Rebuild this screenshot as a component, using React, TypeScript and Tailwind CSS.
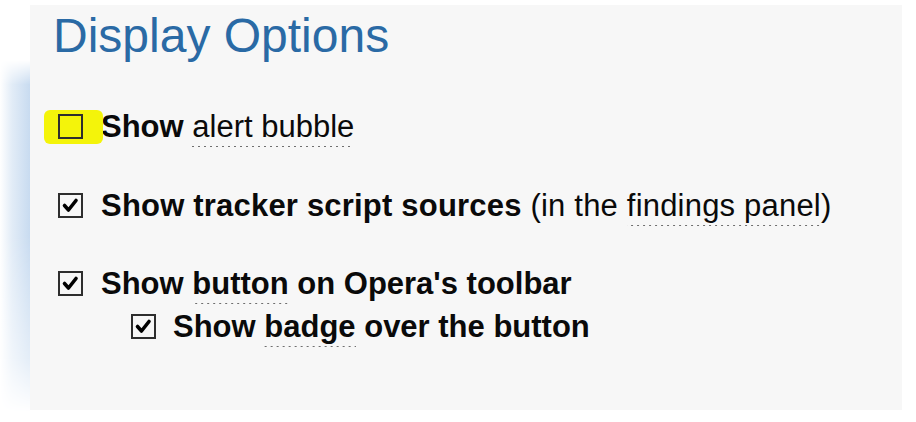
const font = { fontFamily: '"Liberation Sans", Arial, sans-serif' };

const Box = ({ checked, highlight }: { checked?: boolean; highlight?: boolean }) => (
  <div className="relative w-[25px] h-[25px] shrink-0 mt-[3px]">
    {highlight && (
      <div className="absolute left-[-14px] top-[-4px] w-[59px] h-[34px] rounded-[6px] bg-[#f4f40a]" />
    )}
    <div className="relative w-[25px] h-[25px] border-2 border-[#2e2e2e]">
      {checked && (
        <svg viewBox="0 0 21 21" className="w-full h-full">
          <polyline
            points="4.5,10.5 8.5,15 16,5.5"
            fill="none"
            stroke="#000"
            strokeWidth="3.6"
            strokeLinecap="round"
            strokeLinejoin="round"
          />
        </svg>
      )}
    </div>
  </div>
);

const Dotted = ({ children }: { children: React.ReactNode }) => (
  <span className="bg-[linear-gradient(to_right,#6f6f6f_2px,transparent_2px)] bg-[length:6px_1px] bg-repeat-x bg-bottom pb-[3px]">
    {children}
  </span>
);

export default function App() {
  return (
    <div className="w-[916px] h-[422px] bg-white flex pt-[5px]" style={font}>
      {/* left blue edge */}
      <div className="w-[30px] mt-[55px] h-[352px] bg-[linear-gradient(to_right,#ffffff,#e2ecf7_40%,#c8dbf0)] [mask-image:linear-gradient(to_bottom,transparent,black_7%,black_50%,rgba(0,0,0,0.5)_85%,transparent)]" />
      <div className="w-[872px] h-[405px] bg-[#f7f7f7] pt-[7px] pl-[23px]">
        <h1 className="text-[48px] leading-[48px] text-[#2a6aa5] font-normal">Display Options</h1>

        <div className="pl-[5px] text-[31px] leading-[31px] text-[#0a0a0a]">
          <div className="flex items-start gap-[18px] mt-[51px]">
            <Box highlight />
            <div>
              <b>Show</b> <Dotted>alert bubble</Dotted>
            </div>
          </div>

          <div className="flex items-start gap-[18px] mt-[48px]">
            <Box checked />
            <div className="tracking-[0.2px]">
              <b>Show tracker script sources</b> (in the <Dotted>findings panel</Dotted>)
            </div>
          </div>

          <div className="flex items-start gap-[18px] mt-[47px]">
            <Box checked />
            <div className="font-bold">
              Show <Dotted>button</Dotted> on Opera's toolbar
            </div>
          </div>

          <div className="flex items-start gap-[17px] mt-[12px] ml-[73px]">
            <Box checked />
            <div className="font-bold">
              Show <Dotted>badge</Dotted> over the button
            </div>
          </div>
        </div>
      </div>
    </div>
  );
}
